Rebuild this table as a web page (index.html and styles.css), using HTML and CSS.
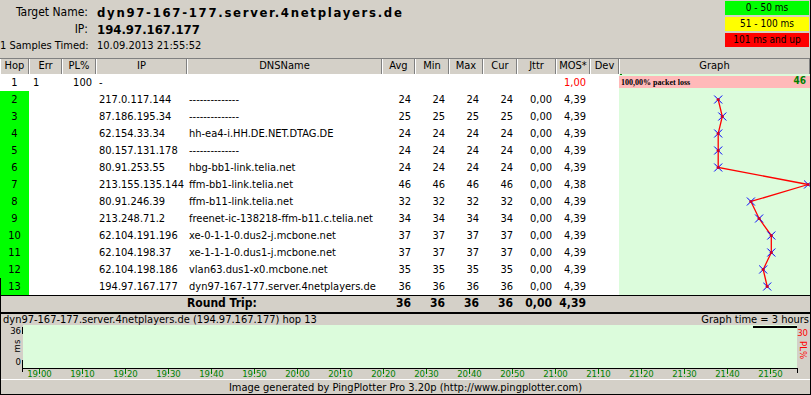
FILE: index.html
```html
<!DOCTYPE html>
<html lang="en">

<head>
    <meta charset="UTF-8">
    <title>PingPlotter - dyn97-167-177.server.4netplayers.de</title>
    <link rel="stylesheet" href="styles.css">
</head>

<body>
    <div class="plot">
        <div class="top">
            <div class="info">
                <span class="lbl">Target Name:</span><span class="val host">dyn97-167-177.server.4netplayers.de</span>
                <span class="lbl">IP:</span><span class="val">194.97.167.177</span>
                <span class="lbl small">1 Samples Timed:</span><span class="small">10.09.2013 21:55:52</span>
            </div>
            <div class="legend">
                <div class="key green">0 - 50 ms</div>
                <div class="key yellow">51 - 100 ms</div>
                <div class="key red">101 ms and up</div>
            </div>
        </div>

        <table class="hops">
            <colgroup>
                <col style="width:29px"><col style="width:33px"><col style="width:34px"><col style="width:91px">
                <col style="width:195px"><col style="width:33px"><col style="width:34px"><col style="width:34px">
                <col style="width:34px"><col style="width:39px"><col style="width:34px"><col style="width:29px">
                <col style="width:191px">
            </colgroup>
            <thead>
                <tr>
                    <th>Hop</th><th>Err</th><th>PL%</th><th>IP</th><th>DNSName</th><th>Avg</th><th>Min</th>
                    <th>Max</th><th>Cur</th><th>Jttr</th><th>MOS*</th><th>Dev</th><th>Graph</th>
                </tr>
            </thead>
            <tbody>
                <tr>
                    <td class="hop">1</td><td class="err">1</td><td>100</td><td class="ip">-</td><td class="dns"></td>
                    <td></td><td></td><td></td><td></td><td></td><td class="bad">1,00</td><td></td>
                    <td class="graph" rowspan="13">
                        <svg width="191" height="221" viewBox="0 0 191 221">
                            <defs>
                                <g id="mark">
                                    <path d="M-4 -4L4 4M4 -4L-4 4" stroke="#0000ff" stroke-width="1" fill="none"/>
                                    <circle r="1.6" fill="#d0002a"/>
                                </g>
                            </defs>
                            <rect x="0" y="2" width="191" height="12" fill="#ffb9b9"/>
                            <line x1="1" y1="0.5" x2="3" y2="0.5" stroke="#008000"/>
                            <text x="2" y="11" class="loss">100,00% packet loss</text>
                            <text x="187" y="10" class="max">46</text>
                            <polyline fill="none" stroke="#ff0000" stroke-width="1.3"
                                points="99.2,25.5 103.3,42.5 99.2,59.5 99.2,76.5 99.2,93.5 189.1,110.5 131.9,127.5 140.1,144.5 152.3,161.5 152.3,178.5 144.2,195.5 148.2,212.5"/>
                            <use href="#mark" x="99.2" y="25.5"/>
                            <use href="#mark" x="103.3" y="42.5"/>
                            <use href="#mark" x="99.2" y="59.5"/>
                            <use href="#mark" x="99.2" y="76.5"/>
                            <use href="#mark" x="99.2" y="93.5"/>
                            <use href="#mark" x="189.1" y="110.5"/>
                            <use href="#mark" x="131.9" y="127.5"/>
                            <use href="#mark" x="140.1" y="144.5"/>
                            <use href="#mark" x="152.3" y="161.5"/>
                            <use href="#mark" x="152.3" y="178.5"/>
                            <use href="#mark" x="144.2" y="195.5"/>
                            <use href="#mark" x="148.2" y="212.5"/>
                        </svg>
                    </td>
                </tr>
                <tr>
                    <td class="hop ok">2</td><td class="err"></td><td></td><td class="ip">217.0.117.144</td><td class="dns">--------------</td>
                    <td>24</td><td>24</td><td>24</td><td>24</td><td>0,00</td><td>4,39</td><td></td>
                </tr>
                <tr>
                    <td class="hop ok">3</td><td class="err"></td><td></td><td class="ip">87.186.195.34</td><td class="dns">--------------</td>
                    <td>25</td><td>25</td><td>25</td><td>25</td><td>0,00</td><td>4,39</td><td></td>
                </tr>
                <tr>
                    <td class="hop ok">4</td><td class="err"></td><td></td><td class="ip">62.154.33.34</td><td class="dns">hh-ea4-i.HH.DE.NET.DTAG.DE</td>
                    <td>24</td><td>24</td><td>24</td><td>24</td><td>0,00</td><td>4,39</td><td></td>
                </tr>
                <tr>
                    <td class="hop ok">5</td><td class="err"></td><td></td><td class="ip">80.157.131.178</td><td class="dns">--------------</td>
                    <td>24</td><td>24</td><td>24</td><td>24</td><td>0,00</td><td>4,39</td><td></td>
                </tr>
                <tr>
                    <td class="hop ok">6</td><td class="err"></td><td></td><td class="ip">80.91.253.55</td><td class="dns">hbg-bb1-link.telia.net</td>
                    <td>24</td><td>24</td><td>24</td><td>24</td><td>0,00</td><td>4,39</td><td></td>
                </tr>
                <tr>
                    <td class="hop ok">7</td><td class="err"></td><td></td><td class="ip">213.155.135.144</td><td class="dns">ffm-bb1-link.telia.net</td>
                    <td>46</td><td>46</td><td>46</td><td>46</td><td>0,00</td><td>4,38</td><td></td>
                </tr>
                <tr>
                    <td class="hop ok">8</td><td class="err"></td><td></td><td class="ip">80.91.246.39</td><td class="dns">ffm-b11-link.telia.net</td>
                    <td>32</td><td>32</td><td>32</td><td>32</td><td>0,00</td><td>4,39</td><td></td>
                </tr>
                <tr>
                    <td class="hop ok">9</td><td class="err"></td><td></td><td class="ip">213.248.71.2</td><td class="dns">freenet-ic-138218-ffm-b11.c.telia.net</td>
                    <td>34</td><td>34</td><td>34</td><td>34</td><td>0,00</td><td>4,39</td><td></td>
                </tr>
                <tr>
                    <td class="hop ok">10</td><td class="err"></td><td></td><td class="ip">62.104.191.196</td><td class="dns">xe-0-1-1-0.dus2-j.mcbone.net</td>
                    <td>37</td><td>37</td><td>37</td><td>37</td><td>0,00</td><td>4,39</td><td></td>
                </tr>
                <tr>
                    <td class="hop ok">11</td><td class="err"></td><td></td><td class="ip">62.104.198.37</td><td class="dns">xe-1-1-1-0.dus1-j.mcbone.net</td>
                    <td>37</td><td>37</td><td>37</td><td>37</td><td>0,00</td><td>4,39</td><td></td>
                </tr>
                <tr>
                    <td class="hop ok">12</td><td class="err"></td><td></td><td class="ip">62.104.198.186</td><td class="dns">vlan63.dus1-x0.mcbone.net</td>
                    <td>35</td><td>35</td><td>35</td><td>35</td><td>0,00</td><td>4,39</td><td></td>
                </tr>
                <tr>
                    <td class="hop ok sel">13</td><td class="err"></td><td></td><td class="ip">194.97.167.177</td><td class="dns">dyn97-167-177.server.4netplayers.de</td>
                    <td>36</td><td>36</td><td>36</td><td>36</td><td>0,00</td><td>4,39</td><td></td>
                </tr>
            </tbody>
            <tfoot>
                <tr>
                    <td class="first" colspan="4"></td><td class="rt-label">Round Trip:</td>
                    <td>36</td><td>36</td><td>36</td><td>36</td><td>0,00</td><td>4,39</td><td></td><td></td>
                </tr>
            </tfoot>
        </table>

        <div class="trend">
            <div class="trend-head">
                <span>dyn97-167-177.server.4netplayers.de (194.97.167.177) hop 13</span>
                <span>Graph time = 3 hours</span>
            </div>
            <svg class="trend-chart" width="810" height="54" viewBox="0 0 810 54">
                <rect x="23" y="0" width="774" height="43" fill="#dcfcdc"/>
                <rect x="753" y="1" width="44" height="2" fill="#000"/>
                <line x1="22" y1="43.5" x2="798" y2="43.5" stroke="#000"/>
                <line x1="797.5" y1="43" x2="797.5" y2="48" stroke="#000"/>
                <line x1="22.5" y1="43" x2="22.5" y2="47" stroke="#000"/>
                <line x1="22.5" y1="2" x2="22.5" y2="9" stroke="#000"/>
                <line x1="22.5" y1="35" x2="22.5" y2="43" stroke="#000"/>
                <text class="axis" x="21" y="9" text-anchor="end">36</text>
                <text class="axis" x="21" y="40" text-anchor="end">0</text>
                <text class="axis" transform="translate(20,21) rotate(-90)" text-anchor="middle">ms</text>
                <text class="axis pl" x="808" y="11" text-anchor="end">30</text>
                <text class="axis pl" transform="translate(800,25) rotate(90)" text-anchor="middle">PL%</text>
                <g class="times" text-anchor="middle">
                    <text x="39.5" y="52">19:00</text>
                    <text x="82.5" y="52">19:10</text>
                    <text x="125.5" y="52">19:20</text>
                    <text x="168.5" y="52">19:30</text>
                    <text x="211.5" y="52">19:40</text>
                    <text x="254.5" y="52">19:50</text>
                    <text x="297.5" y="52">20:00</text>
                    <text x="340.5" y="52">20:10</text>
                    <text x="383.5" y="52">20:20</text>
                    <text x="426.5" y="52">20:30</text>
                    <text x="469.5" y="52">20:40</text>
                    <text x="512.5" y="52">20:50</text>
                    <text x="555.5" y="52">21:00</text>
                    <text x="598.5" y="52">21:10</text>
                    <text x="641.5" y="52">21:20</text>
                    <text x="684.5" y="52">21:30</text>
                    <text x="727.5" y="52">21:40</text>
                    <text x="770.5" y="52">21:50</text>
                </g>
                <path class="ticks" d="M39.5 44v5M82.5 44v5M125.5 44v5M168.5 44v5M211.5 44v5M254.5 44v5M297.5 44v5M340.5 44v5M383.5 44v5M426.5 44v5M469.5 44v5M512.5 44v5M555.5 44v5M598.5 44v5M641.5 44v5M684.5 44v5M727.5 44v5M770.5 44v5"/>
            </svg>
            <div class="credit">Image generated by PingPlotter Pro 3.20p (http://www.pingplotter.com)</div>
        </div>
    </div>
</body>

</html>
```

FILE: styles.css
```css
body {
    margin: 0;
    background: #d4d0c8;
    color: #000;
    font-family: "DejaVu Sans Condensed", "DejaVu Sans", sans-serif;
    font-stretch: condensed;
    font-size: 11px;
}

.plot {
    width: 810px;
    height: 395px;
    border-right: 1px solid #000;
    overflow: hidden;
}

/* header with target + legend */
.top {
    height: 58px;
    display: flex;
    justify-content: space-between;
}

.info {
    display: grid;
    grid-template-columns: 88px auto;
    grid-template-rows: 17px 17px 15px;
    column-gap: 9px;
    padding-top: 4px;
}

.lbl {
    text-align: right;
    font-size: 12px;
    line-height: 17px;
    white-space: nowrap;
}

.val {
    font-size: 13px;
    font-weight: bold;
    line-height: 17px;
    white-space: nowrap;
}

.host {
    letter-spacing: 1.7px;
}

.small {
    font-size: 11px;
    line-height: 15px;
}

.legend {
    width: 84px;
    margin: 1px 1px 0 0;
    display: flex;
    flex-direction: column;
    gap: 2px;
    font-size: 10px;
}

.key {
    height: 14px;
    line-height: 14px;
    text-align: center;
    white-space: nowrap;
}

.green {
    background: #00ff00;
}

.yellow {
    background: #ffff00;
}

.red {
    background: #ff0000;
}

/* hop table */
.hops {
    width: 810px;
    table-layout: fixed;
    border-collapse: separate;
    border-spacing: 0;
    border-top: 1px solid #808080;
}

.hops th {
    height: 14px;
    padding: 0 0 1px 0;
    line-height: 14px;
    font-weight: normal;
    background: #d4d0c8;
    box-shadow: inset 1px 0 0 #fff, inset -1px 0 0 #808080;
    white-space: nowrap;
    overflow: hidden;
}

.hops td {
    height: 17px;
    padding: 0 4px 0 0;
    line-height: 17px;
    text-align: right;
    white-space: nowrap;
    overflow: hidden;
}

.hops tbody td {
    background: #fff;
}

.hops td.hop {
    padding: 0;
    text-align: center;
}

.hops td.ok {
    background: #00ff00;
}

.hops td.sel {
    box-shadow: inset 1px 0 0 #000;
}

.hops td.err {
    padding: 0 0 0 4px;
    text-align: left;
}

.hops td.ip {
    padding: 0 0 0 3px;
    text-align: left;
}

.hops td.dns {
    padding: 0 0 0 2px;
    text-align: left;
}

.hops td.bad {
    color: #ff0000;
}

.hops td.graph {
    padding: 0;
    vertical-align: top;
    background: #dcfcdc;
}

.graph svg {
    display: block;
}

.loss {
    font-family: "Liberation Serif", serif;
    font-size: 8px;
    font-weight: bold;
}

.max {
    font-size: 10px;
    font-weight: bold;
    fill: #008000;
    text-anchor: end;
}

.hops tfoot td {
    font-size: 12px;
    font-weight: bold;
    background: #d4d0c8;
    box-shadow: inset 0 1px 0 #000;
}

.hops tfoot td.first {
    box-shadow: inset 0 1px 0 #000, inset 1px 0 0 #000;
}

.hops tfoot td.rt-label {
    padding: 0;
    text-align: left;
}

/* bottom trend graph */
.trend {
    border-top: 2px solid #000;
    border-left: 1px solid #000;
    border-bottom: 1px solid #000;
}

.trend-head {
    display: flex;
    justify-content: space-between;
    height: 11px;
    line-height: 11px;
    padding: 0 1px 0 2px;
    white-space: nowrap;
}

.trend-chart {
    display: block;
    margin-left: -1px;
}

.axis {
    font-size: 9.5px;
}

.pl {
    fill: #ff0000;
}

.times {
    font-size: 9.5px;
    fill: #008000;
}

.ticks {
    stroke: #008000;
    stroke-width: 1;
}

.credit {
    height: 13px;
    padding-top: 1px;
    border-top: 1px solid #fff;
    line-height: 13px;
    text-align: center;
}
```
